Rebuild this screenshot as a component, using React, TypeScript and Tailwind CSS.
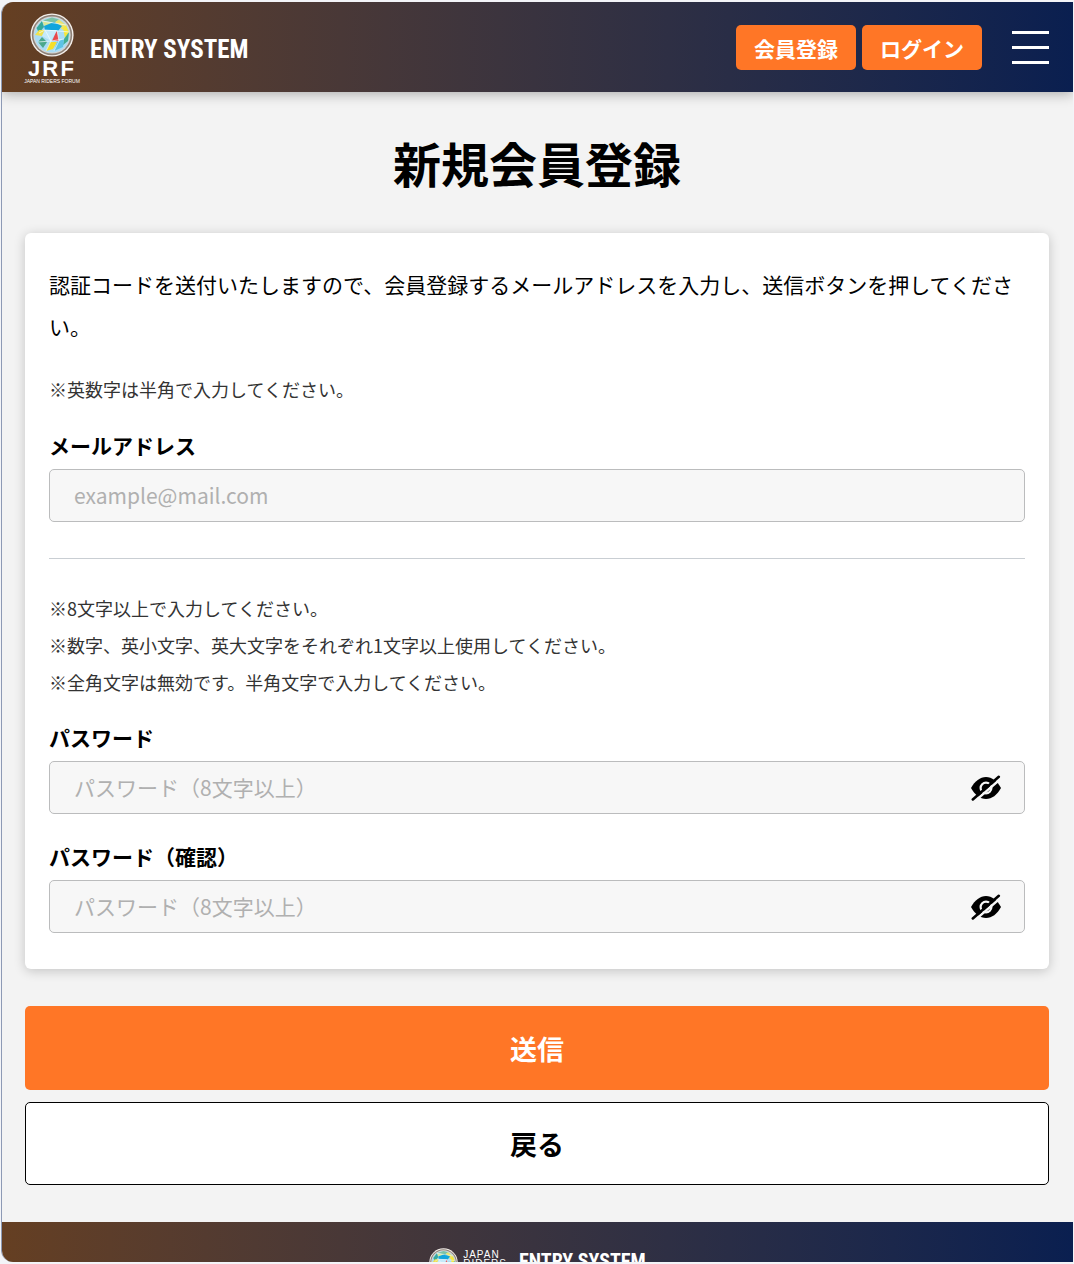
import { useState } from 'react';
import type { ReactNode } from 'react';

const NOTES = [
  '※8文字以上で入力してください。',
  '※数字、英小文字、英大文字をそれぞれ1文字以上使用してください。',
  '※全角文字は無効です。半角文字で入力してください。',
];

const INPUT_CLASS =
  'block h-[53px] w-full rounded-[5px] border border-[#bbbcbd] bg-[#f7f7f7] px-6 pb-[2px] text-[21px] text-black placeholder:text-[#b0b0b0] placeholder:opacity-100';

// Faceted globe inside a silver ring
function Globe({ className }: { className?: string }) {
  return (
    <svg viewBox="0 0 44 44" className={className} aria-hidden="true">
      <circle cx="22" cy="22" r="21.6" fill="#f4efeb" />
      <circle cx="22" cy="22" r="20.2" fill="#8d8178" />
      <circle cx="22" cy="22" r="18.6" fill="#d9d4cf" />
      <circle cx="22" cy="22" r="17.6" fill="#a9dcf5" />
      <path d="M13 7.5 L22 4.6 L29 6.5 L24 10Z" fill="#7cc3a4" />
      <path d="M12 8 L24 10 L15 14Z" fill="#d9e79a" />
      <path d="M29 6.5 L36 12 L33 17 L24 10Z" fill="#ece36a" />
      <path d="M14 13 L24 9 L32 13 L28 18 L15 17Z" fill="#12a5dc" />
      <path d="M6.5 15 L12 8 L14 14 L9 20Z" fill="#35a99b" />
      <path d="M5 22 L9 17 L15 17 L12 23Z" fill="#f0e14e" />
      <path d="M33 15 L36 12 L39 19 L35 25Z" fill="#f7e83a" />
      <path d="M34 26 L39 19 L38 28 L33 32Z" fill="#43ae93" />
      <path d="M27 17 L29 28 L22 28Z" fill="#e8474c" />
      <path d="M15 17 L27 17 L21 28 L12 23Z" fill="#c5eafa" />
      <path d="M8 29 L12 24 L17 29 L13 35Z" fill="#4ba88c" />
      <path d="M20 29 L27 29 L23 36 L16 38Z" fill="#f6de2b" />
      <path d="M27 29 L34 26 L33 34 L24 38Z" fill="#5ec3e6" />
      <path
        d="M12 8 L24 10 L36 12 M28 18 L39 19 M15 17 L28 18 M15 17 L9 20 M15 17 L21 28 L34 26 M8 29 L21 28 L16 38 M27 17 L29 28 L24 38"
        fill="none"
        stroke="#f2fbff"
        strokeWidth="0.7"
      />
    </svg>
  );
}

function EyeSlash() {
  return (
    <svg viewBox="0 0 32 26" className="h-[26px] w-8" aria-hidden="true">
      <path d="M1 13 C5 6 10 2 16 2 S27 6 31 13 C27 20 22 24 16 24 S5 20 1 13Z" fill="#000" />
      <circle cx="16" cy="13" r="5.4" fill="none" stroke="#f7f7f7" strokeWidth="2.2" />
      <path d="M4.5 26.5 L31 3.5" stroke="#f7f7f7" strokeWidth="2.4" />
      <path d="M2.8 24.4 L28.8 1.8" stroke="#000" strokeWidth="2.6" strokeLinecap="round" />
    </svg>
  );
}

function HeaderButton({ children }: { children: ReactNode }) {
  return (
    <a
      href="#"
      className="flex h-[45px] w-[120px] items-center justify-center rounded-[5px] bg-[#ff7626] pt-[3px] text-[21px] font-bold text-white"
    >
      {children}
    </a>
  );
}

function PasswordField({ id, label }: { id: string; label: string }) {
  const [visible, setVisible] = useState(false);

  return (
    <div>
      <label htmlFor={id} className="block text-[21px] leading-[32px] font-bold">
        {label}
      </label>
      <div className="relative mt-2">
        <input
          id={id}
          type={visible ? 'text' : 'password'}
          placeholder="パスワード（8文字以上）"
          className={INPUT_CLASS}
        />
        <button
          type="button"
          aria-label="パスワードを表示"
          onClick={() => setVisible(!visible)}
          className="absolute inset-y-0 right-[23px] flex items-center"
        >
          <EyeSlash />
        </button>
      </div>
    </div>
  );
}

export default function App() {
  return (
    <div className="bg-[#f3f4f8] pt-[2px] pr-px pb-[2px] pl-px font-['Noto_Sans_CJK_JP',sans-serif] text-black">
      <div className="overflow-hidden rounded-l-xl border-l border-[#8d9ab5] bg-[#f3f3f3]">
        <header className="flex h-[90px] items-center bg-linear-to-r from-[#653f22] to-[#0a1f50] px-6 shadow-[0_2px_12px_rgba(0,0,0,0.3)]">
          <a href="#" className="flex items-center gap-3 text-white">
            <span className="flex w-[52px] flex-col items-center pt-[2px] font-['Liberation_Sans',sans-serif]">
              <Globe className="size-[44px]" />
              <span className="mt-[2px] text-[22px] leading-[20px] font-bold tracking-widest">JRF</span>
              <span className="text-[5px] leading-[5px] whitespace-nowrap">JAPAN RIDERS FORUM</span>
            </span>
            <span className="pt-[6px] font-['Roboto_Condensed','Liberation_Sans_Narrow',sans-serif] text-[25px] font-bold whitespace-nowrap">
              ENTRY SYSTEM
            </span>
          </a>
          <nav className="ml-auto flex items-center gap-[6px]">
            <HeaderButton>会員登録</HeaderButton>
            <HeaderButton>ログイン</HeaderButton>
            <button type="button" aria-label="メニュー" className="ml-6 flex w-[37px] flex-col gap-3">
              <span className="h-[3px] bg-white" />
              <span className="h-[3px] bg-white" />
              <span className="h-[3px] bg-white" />
            </button>
          </nav>
        </header>

        <main className="pt-[34px] pr-6 pb-[37px] pl-[23px]">
          <h1 className="text-center text-[48px] leading-[72px] font-bold">新規会員登録</h1>

          <form onSubmit={(e) => e.preventDefault()}>
            <section className="mt-[35px] rounded-md bg-white px-6 pt-[30px] pb-9 shadow-[0_2px_12px_rgba(0,0,0,0.2)]">
              <p className="text-[21px] leading-[42px]">
                認証コードを送付いたしますので、会員登録するメールアドレスを入力し、送信ボタンを押してください。
              </p>
              <p className="mt-6 text-[18px] leading-[37px] text-[#333]">※英数字は半角で入力してください。</p>

              <label htmlFor="email" className="mt-[21px] block text-[21px] leading-[32px] font-bold">
                メールアドレス
              </label>
              <input id="email" type="email" placeholder="example@mail.com" className={`mt-2 ${INPUT_CLASS}`} />

              <hr className="mt-9 mb-[31px] border-[#c9ced3]" />

              <div className="text-[18px] leading-[37px] text-[#333]">
                {NOTES.map((note) => (
                  <p key={note}>{note}</p>
                ))}
              </div>

              <div className="mt-5 flex flex-col gap-[26px]">
                <PasswordField id="password" label="パスワード" />
                <PasswordField id="password-confirm" label="パスワード（確認）" />
              </div>
            </section>

            <div className="mt-[37px] flex flex-col gap-3 text-[27px] font-bold">
              <button type="submit" className="h-[84px] rounded-[5px] bg-[#ff7626] pt-[2px] text-white">
                送信
              </button>
              <button type="button" className="h-[83px] rounded-[5px] border border-black bg-white pt-[2px]">
                戻る
              </button>
            </div>
          </form>
        </main>

        {/* Top strip of the footer */}
        <footer className="flex h-10 items-start justify-center gap-3 overflow-hidden bg-linear-to-r from-[#653f22] to-[#0a1f50] pt-[26px] text-white">
          <span className="flex gap-[5px]">
            <Globe className="size-[29px]" />
            <span className="pt-[2px] font-['Liberation_Sans',sans-serif] text-[10px] leading-[9px] tracking-widest">
              JAPAN
              <br />
              RIDERS
            </span>
          </span>
          <span className="pt-[3px] font-['Roboto_Condensed','Liberation_Sans_Narrow',sans-serif] text-[20px] leading-[20px] font-bold">
            ENTRY SYSTEM
          </span>
        </footer>
      </div>
    </div>
  );
}
